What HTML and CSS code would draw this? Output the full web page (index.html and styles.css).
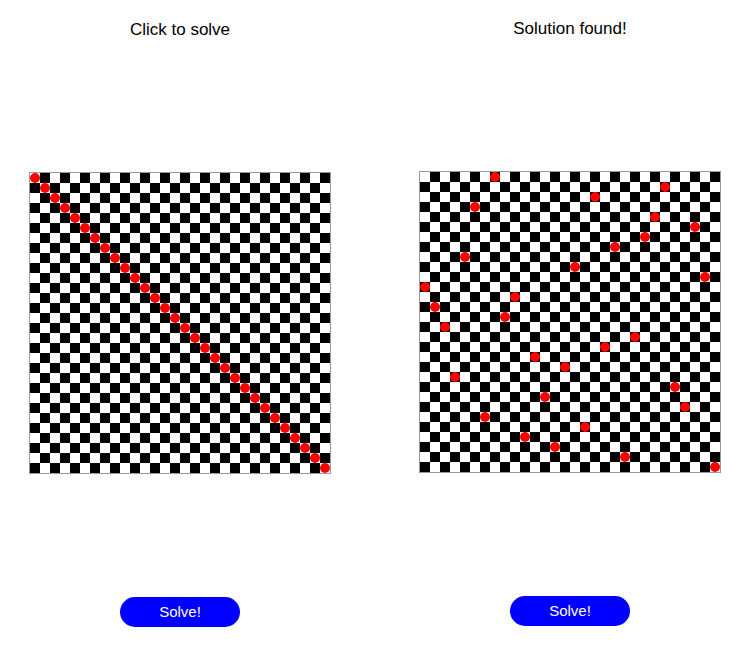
FILE: index.html
```html
<!DOCTYPE html>
<html lang="en">
<head>
<meta charset="utf-8">
<title>N Queens</title>
<link rel="stylesheet" href="styles.css">
</head>
<body>
<main class="page">
  <section class="panel panel--left">
    <h1 class="title">Click to solve</h1>
    <div class="board">
      <div class="queen" style="grid-area:1/1"></div>
      <div class="queen" style="grid-area:2/2"></div>
      <div class="queen" style="grid-area:3/3"></div>
      <div class="queen" style="grid-area:4/4"></div>
      <div class="queen" style="grid-area:5/5"></div>
      <div class="queen" style="grid-area:6/6"></div>
      <div class="queen" style="grid-area:7/7"></div>
      <div class="queen" style="grid-area:8/8"></div>
      <div class="queen" style="grid-area:9/9"></div>
      <div class="queen" style="grid-area:10/10"></div>
      <div class="queen" style="grid-area:11/11"></div>
      <div class="queen" style="grid-area:12/12"></div>
      <div class="queen" style="grid-area:13/13"></div>
      <div class="queen" style="grid-area:14/14"></div>
      <div class="queen" style="grid-area:15/15"></div>
      <div class="queen" style="grid-area:16/16"></div>
      <div class="queen" style="grid-area:17/17"></div>
      <div class="queen" style="grid-area:18/18"></div>
      <div class="queen" style="grid-area:19/19"></div>
      <div class="queen" style="grid-area:20/20"></div>
      <div class="queen" style="grid-area:21/21"></div>
      <div class="queen" style="grid-area:22/22"></div>
      <div class="queen" style="grid-area:23/23"></div>
      <div class="queen" style="grid-area:24/24"></div>
      <div class="queen" style="grid-area:25/25"></div>
      <div class="queen" style="grid-area:26/26"></div>
      <div class="queen" style="grid-area:27/27"></div>
      <div class="queen" style="grid-area:28/28"></div>
      <div class="queen" style="grid-area:29/29"></div>
      <div class="queen" style="grid-area:30/30"></div>
    </div>
    <button class="solve" type="button">Solve!</button>
  </section>
  <section class="panel panel--right">
    <h1 class="title">Solution found!</h1>
    <div class="board">
      <div class="queen" style="grid-area:1/8"></div>
      <div class="queen" style="grid-area:2/25"></div>
      <div class="queen" style="grid-area:3/18"></div>
      <div class="queen" style="grid-area:4/6"></div>
      <div class="queen" style="grid-area:5/24"></div>
      <div class="queen" style="grid-area:6/28"></div>
      <div class="queen" style="grid-area:7/23"></div>
      <div class="queen" style="grid-area:8/20"></div>
      <div class="queen" style="grid-area:9/5"></div>
      <div class="queen" style="grid-area:10/16"></div>
      <div class="queen" style="grid-area:11/29"></div>
      <div class="queen" style="grid-area:12/1"></div>
      <div class="queen" style="grid-area:13/10"></div>
      <div class="queen" style="grid-area:14/2"></div>
      <div class="queen" style="grid-area:15/9"></div>
      <div class="queen" style="grid-area:16/3"></div>
      <div class="queen" style="grid-area:17/22"></div>
      <div class="queen" style="grid-area:18/19"></div>
      <div class="queen" style="grid-area:19/12"></div>
      <div class="queen" style="grid-area:20/15"></div>
      <div class="queen" style="grid-area:21/4"></div>
      <div class="queen" style="grid-area:22/26"></div>
      <div class="queen" style="grid-area:23/13"></div>
      <div class="queen" style="grid-area:24/27"></div>
      <div class="queen" style="grid-area:25/7"></div>
      <div class="queen" style="grid-area:26/17"></div>
      <div class="queen" style="grid-area:27/11"></div>
      <div class="queen" style="grid-area:28/14"></div>
      <div class="queen" style="grid-area:29/21"></div>
      <div class="queen" style="grid-area:30/30"></div>
    </div>
    <button class="solve" type="button">Solve!</button>
  </section>
</main>
</body>
</html>
```
FILE: styles.css
```css
html, body {
  margin: 0;
  padding: 0;
  background: #fff;
}

body {
  font-family: "Liberation Sans", Arial, sans-serif;
  color: #000;
}

.page {
  display: grid;
  grid-template-columns: 360px 360px;
  column-gap: 30px;
  width: 750px;
}

.panel {
  display: flex;
  flex-direction: column;
  align-items: center;
  padding-top: 19px;
}

.panel--left {
  padding-top: 20px;
}

.title {
  margin: 0;
  font-size: 17px;
  font-weight: normal;
  line-height: 20px;
}

.board {
  margin-top: 133px;
  width: 300px;
  height: 300px;
  display: grid;
  grid-template-columns: repeat(30, 10px);
  grid-template-rows: repeat(30, 10px);
  background: repeating-conic-gradient(#000 0 25%, #fff 0 50%) 0 0 / 20px 20px;
  outline: 1px solid #9a9a9a;
}

.queen {
  width: 10px;
  height: 10px;
  border-radius: 50%;
  background: #ff0000;
}

.solve {
  margin-top: 124px;
  width: 120px;
  height: 30px;
  border: 0;
  border-radius: 15px;
  background: #0000ff;
  color: #fff;
  font-family: "Liberation Sans", Arial, sans-serif;
  font-size: 15px;
  line-height: 30px;
  padding: 0;
}
```
